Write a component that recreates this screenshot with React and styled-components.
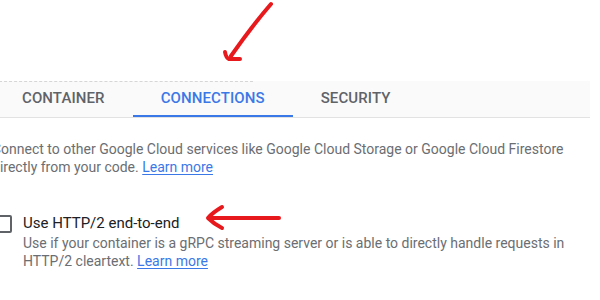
import styled, { createGlobalStyle } from 'styled-components';

const GlobalStyle = createGlobalStyle`
  html, body {
    margin: 0;
    padding: 0;
    background: #ffffff;
    overflow: hidden;
  }
  body {
    font-family: Roboto, "Liberation Sans", Arial, sans-serif;
  }
`;

const Page = styled.div`
  position: relative;
  width: 600px;
  height: 300px;
  padding-top: 81px;
  box-sizing: border-box;
`;

const TabBar = styled.div`
  position: relative;
  display: flex;
  height: 37px;
  width: 596px;
  margin-left: -6px;
  background: #fafafa;
  border-bottom: 1px solid #e2e2e2;
  box-sizing: border-box;
`;

const DottedEdge = styled.div`
  position: absolute;
  top: 0;
  left: 0;
  width: 259px;
  border-top: 1px dashed #d6d6d6;
`;

const Tab = styled.div`
  display: flex;
  align-items: center;
  padding: 0 28px;
  height: 100%;
  box-sizing: border-box;
  font-size: 15px;
  font-weight: 500;
  letter-spacing: 0.1px;
  color: ${({ $active }) => ($active ? '#3b78e7' : '#5f6368')};
  border-bottom: 2px solid ${({ $active }) => ($active ? '#3b78e7' : 'transparent')};
  margin-bottom: -1px;
`;

const Content = styled.div`
  padding: 22px 0 0 0;
  margin-left: -8px;
`;

const Para = styled.p`
  margin: 0;
  font-size: 14px;
  line-height: 18px;
  color: #6b6e72;
`;

const Link = styled.a`
  color: #3b78e7;
  text-decoration: underline;
  text-underline-offset: 2px;
  text-decoration-thickness: 1px;
`;

const Option = styled.div`
  display: flex;
  align-items: flex-start;
  gap: 11px;
  margin-top: 36px;
  margin-left: 2px;
`;

const Box = styled.div`
  width: 18px;
  height: 18px;
  border: 2px solid #5f6368;
  border-radius: 2px;
  box-sizing: border-box;
  margin-top: 3px;
  flex: none;
`;

const OptionText = styled.div`
  display: flex;
  flex-direction: column;
`;

const OptionLabel = styled.div`
  font-size: 15px;
  line-height: 22px;
  color: #202124;
`;

const Hint = styled.div`
  font-size: 14px;
  line-height: 18px;
  color: #6b6e72;
  margin-top: 0;
`;

const Arrow = styled.svg`
  position: absolute;
  left: 0;
  top: 0;
  pointer-events: none;
`;

export default function App() {
  return (
    <>
      <GlobalStyle />
      <Page>
        <TabBar>
          <DottedEdge />
          <Tab>CONTAINER</Tab>
          <Tab $active>CONNECTIONS</Tab>
          <Tab>SECURITY</Tab>
        </TabBar>
        <Content>
          <Para>
            Connect to other Google Cloud services like Google Cloud Storage or Google Cloud Firestore
            directly from your code. <Link>Learn more</Link>
          </Para>
          <Option>
            <Box />
            <OptionText>
              <OptionLabel>Use HTTP/2 end-to-end</OptionLabel>
              <Hint>
                Use if your container is a gRPC streaming server or is able to directly handle requests in
                <br />
                HTTP/2 cleartext. <Link>Learn more</Link>
              </Hint>
            </OptionText>
          </Option>
        </Content>
        <Arrow width="600" height="300" viewBox="0 0 600 300">
          <g fill="none" stroke="#e8191c" strokeWidth="4" strokeLinecap="round" strokeLinejoin="round">
            <path d="M271 4 Q252 26 231 56" />
            <path d="M225 52 Q226 58 229 59 L240 59" />
            <path d="M279 218 L209 218" />
            <path d="M222 207 Q212 213 208 218 Q214 224 222 228" />
          </g>
        </Arrow>
      </Page>
    </>
  );
}
